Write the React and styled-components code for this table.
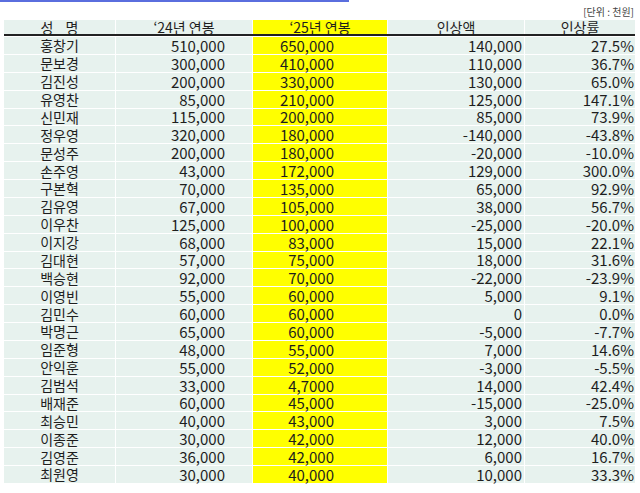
import React from 'react'
import styled, { createGlobalStyle } from 'styled-components'

const GlobalStyle = createGlobalStyle`
  html, body {
    margin: 0;
    padding: 0;
    background: #fff;
  }
  body {
    font-family: "Noto Sans CJK KR", "Noto Sans", sans-serif;
    color: #1e1e1e;
  }
`

const COLS = '111px 136px 134px 136px 110px'

const Page = styled.div`
  width: 640px;
  height: 493px;
  overflow: hidden;
  padding: 0 5px 0 4px;
  box-sizing: border-box;
`

const TopRule = styled.div`
  width: 349px;
  height: 2px;
  margin-left: -4px;
  background: #5a6ede;
`

const Unit = styled.div`
  height: 18px;
  display: flex;
  align-items: center;
  justify-content: flex-end;
  font-size: 10px;
  color: #444;
  padding-right: 1px;
`

const HeaderRow = styled.div`
  display: grid;
  grid-template-columns: ${COLS};
  column-gap: 1px;
  border-bottom: 2px solid #222;
`

const DataRow = styled.div`
  display: grid;
  grid-template-columns: ${COLS};
  column-gap: 1px;
  margin-top: 1px;
`

const Cell = styled.div`
  height: ${({ $h }) => $h};
  display: flex;
  align-items: center;
  justify-content: ${({ $align }) => ($align === 'right' ? 'flex-end' : 'center')};
  gap: ${({ $gap }) => $gap || 0}px;
  padding-right: ${({ $pr }) => $pr || 0}px;
  background: ${({ $hl }) => ($hl ? '#ffff00' : '#e7f2ee')};
  font-size: ${({ $fs }) => $fs || 15}px;
  line-height: 1;
  white-space: nowrap;
  box-sizing: border-box;
`

const rows = [
  ['홍창기', '510,000', '650,000', '140,000', '27.5%'],
  ['문보경', '300,000', '410,000', '110,000', '36.7%'],
  ['김진성', '200,000', '330,000', '130,000', '65.0%'],
  ['유영찬', '85,000', '210,000', '125,000', '147.1%'],
  ['신민재', '115,000', '200,000', '85,000', '73.9%'],
  ['정우영', '320,000', '180,000', '-140,000', '-43.8%'],
  ['문성주', '200,000', '180,000', '-20,000', '-10.0%'],
  ['손주영', '43,000', '172,000', '129,000', '300.0%'],
  ['구본혁', '70,000', '135,000', '65,000', '92.9%'],
  ['김유영', '67,000', '105,000', '38,000', '56.7%'],
  ['이우찬', '125,000', '100,000', '-25,000', '-20.0%'],
  ['이지강', '68,000', '83,000', '15,000', '22.1%'],
  ['김대현', '57,000', '75,000', '18,000', '31.6%'],
  ['백승현', '92,000', '70,000', '-22,000', '-23.9%'],
  ['이영빈', '55,000', '60,000', '5,000', '9.1%'],
  ['김민수', '60,000', '60,000', '0', '0.0%'],
  ['박명근', '65,000', '60,000', '-5,000', '-7.7%'],
  ['임준형', '48,000', '55,000', '7,000', '14.6%'],
  ['안익훈', '55,000', '52,000', '-3,000', '-5.5%'],
  ['김범석', '33,000', '4,7000', '14,000', '42.4%'],
  ['배재준', '60,000', '45,000', '-15,000', '-25.0%'],
  ['최승민', '40,000', '43,000', '3,000', '7.5%'],
  ['이종준', '30,000', '42,000', '12,000', '40.0%'],
  ['김영준', '36,000', '42,000', '6,000', '16.7%'],
  ['최원영', '30,000', '40,000', '10,000', '33.3%'],
]

const ROW_H = '16.88px'

export default function App() {
  return (
    <Page>
      <GlobalStyle />
      <TopRule />
      <Unit>[단위 : 천원]</Unit>
      <HeaderRow>
        <Cell $h="14px" $fs={14} $gap={12}>
          <span>성</span>
          <span>명</span>
        </Cell>
        <Cell $h="14px" $fs={14}>‘24년 연봉</Cell>
        <Cell $h="14px" $fs={14} $hl>‘25년 연봉</Cell>
        <Cell $h="14px" $fs={14}>인상액</Cell>
        <Cell $h="14px" $fs={14}>인상률</Cell>
      </HeaderRow>
      {rows.map((r) => (
        <DataRow key={r[0]}>
          <Cell $h={ROW_H} $fs={14}>{r[0]}</Cell>
          <Cell $h={ROW_H} $align="right" $pr={27}>{r[1]}</Cell>
          <Cell $h={ROW_H} $align="right" $pr={53} $hl>{r[2]}</Cell>
          <Cell $h={ROW_H} $align="right" $pr={2}>{r[3]}</Cell>
          <Cell $h={ROW_H} $align="right" $pr={1}>{r[4]}</Cell>
        </DataRow>
      ))}
    </Page>
  )
}
